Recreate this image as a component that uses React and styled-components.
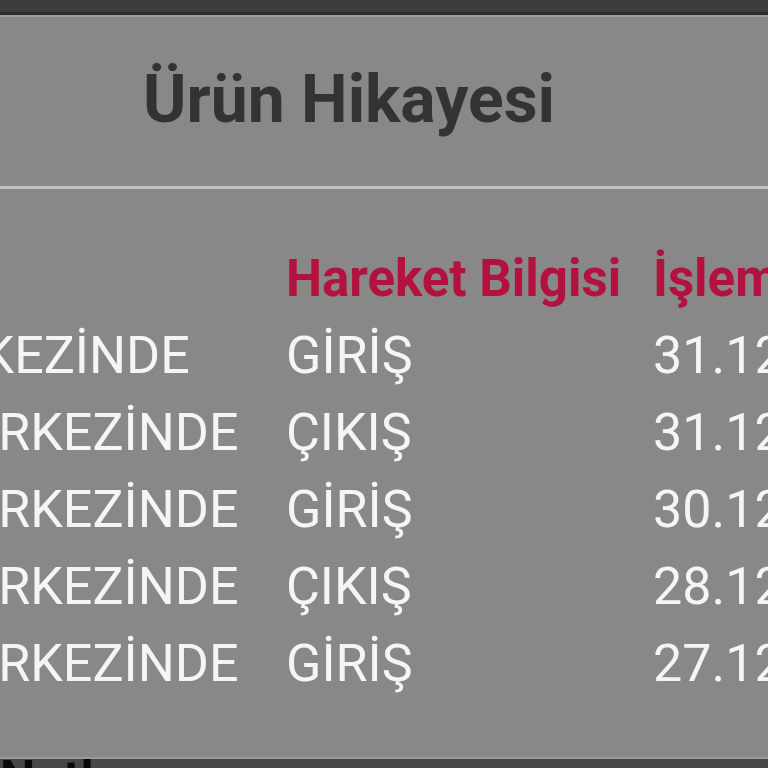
import React from "react";
import styled, { createGlobalStyle } from "styled-components";

const GlobalStyle = createGlobalStyle`
  body {
    margin: 0;
    background: #3d3d3d;
    font-family: Roboto, "Noto Sans", sans-serif;
  }
`;

const Page = styled.div`
  height: 768px;
  display: flex;
  flex-direction: column;
  overflow: hidden;
`;

const TopBar = styled.div`
  height: 12px;
  background: #3d3d3d;
  border-bottom: 3px solid #2c2c2c;
`;

const Dialog = styled.div`
  flex: 1;
  background: #888888;
  border-top: 2px solid #9c9c9c;
  border-bottom: 2px solid #9a9a9a;
  overflow: hidden;
`;

const Title = styled.h2`
  margin: 0;
  padding: 43px 0 0 143px;
  font-size: 66px;
  line-height: 80px;
  font-weight: 700;
  color: #333333;
`;

const Divider = styled.div`
  margin-top: 46px;
  height: 3px;
  background: #c2c2c2;
`;

const TableWrap = styled.div`
  overflow: hidden;
  padding-top: 51px;
`;

const Table = styled.div`
  display: grid;
  grid-template-columns: 631px 367px max-content;
  grid-auto-rows: 77px;
  margin-left: -345px;
  width: max-content;
`;

const HeadCell = styled.div`
  height: 78px;
  line-height: 78px;
  font-size: 51px;
  font-weight: 700;
  color: #b3123f;
  white-space: nowrap;
`;

const Cell = styled.div`
  line-height: 77px;
  font-size: 52px;
  color: #f5f5f5;
  white-space: nowrap;
`;

const BottomStrip = styled.div`
  height: 9px;
  background: #474747;
  overflow: hidden;
`;

const BottomText = styled.div`
  margin-top: -4px;
  font-size: 50px;
  line-height: 48px;
  font-weight: 700;
  color: #0a0a0a;
  white-space: nowrap;
`;

const rows = [
  { place: "DAĞITIM MERKEZİNDE", move: "GİRİŞ", date: "31.12.2020 14:25" },
  { place: "TRANSFER MERKEZİNDE", move: "ÇIKIŞ", date: "31.12.2020 03:10" },
  { place: "TRANSFER MERKEZİNDE", move: "GİRİŞ", date: "30.12.2020 22:47" },
  { place: "TRANSFER MERKEZİNDE", move: "ÇIKIŞ", date: "28.12.2020 18:05" },
  { place: "TRANSFER MERKEZİNDE", move: "GİRİŞ", date: "27.12.2020 09:32" },
];

const App = () => {
  return (
    <Page>
      <GlobalStyle />
      <TopBar />
      <Dialog>
        <Title>Ürün Hikayesi</Title>
        <Divider />
        <TableWrap>
          <Table>
            <HeadCell>Bulunduğu Yer</HeadCell>
            <HeadCell>Hareket Bilgisi</HeadCell>
            <HeadCell>İşlem Tarihi</HeadCell>
            {rows.map((row, i) => (
              <React.Fragment key={i}>
                <Cell>{row.place}</Cell>
                <Cell>{row.move}</Cell>
                <Cell>{row.date}</Cell>
              </React.Fragment>
            ))}
          </Table>
        </TableWrap>
      </Dialog>
      <BottomStrip>
        <BottomText>Notlar:</BottomText>
      </BottomStrip>
    </Page>
  );
};

export default App;
